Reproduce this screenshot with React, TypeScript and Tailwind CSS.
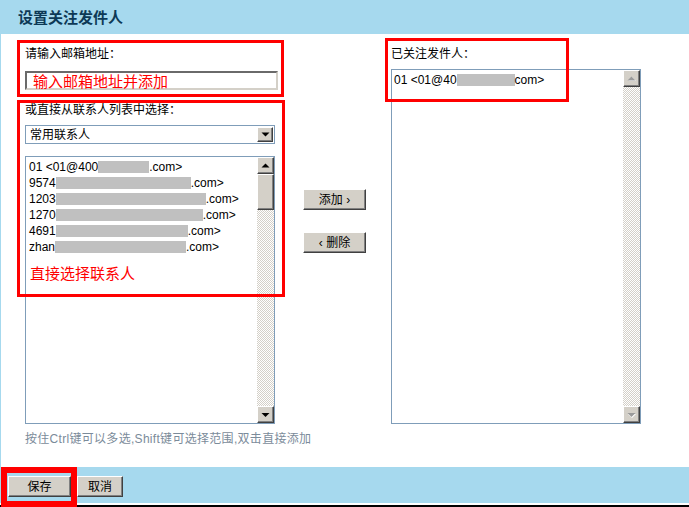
import React from "react";

const btn =
  "bg-[#d4d0c8] border border-t-white border-l-white border-b-[#404040] border-r-[#404040] shadow-[inset_-1px_-1px_0_#808080] flex items-center justify-center text-[12px] leading-none text-black";

function Arrow({ up, disabled }: { up?: boolean; disabled?: boolean }) {
  return (
    <div className={`${btn} h-[17px] w-[17px] shrink-0`}>
      <svg width="9" height="6" viewBox="0 0 9 6">
        {disabled && (
          <polygon points={up ? "5,1 9,5 1,5" : "1,2 9,2 5,6"} fill="#ffffff" />
        )}
        <polygon
          points={up ? "4.5,0.5 8.5,4.5 0.5,4.5" : "0.5,1 8.5,1 4.5,5"}
          fill={disabled ? "#9a9a9a" : "#000000"}
        />
      </svg>
    </div>
  );
}

function Scrollbar({ thumb, disabled }: { thumb?: boolean; disabled?: boolean }) {
  return (
    <div className="w-[17px] flex flex-col shrink-0">
      <Arrow up disabled={disabled} />
      {thumb && <div className={`${btn} h-[36px] w-[17px] shrink-0`} />}
      <div className="flex-1 bg-[image:repeating-conic-gradient(#d4d0c8_0%_25%,#ffffff_0%_50%)] bg-[length:2px_2px]" />
      <Arrow disabled={disabled} />
    </div>
  );
}

function Gray({ w }: { w: number }) {
  const widths: Record<number, string> = {
    51: "w-[51px]",
    58: "w-[58px]",
    135: "w-[135px]",
    150: "w-[150px]",
    147: "w-[147px]",
    132: "w-[132px]",
    131: "w-[131px]",
  };
  return <span className={`inline-block h-[12px] bg-[#c0c0c0] align-[-2px] ${widths[w]}`} />;
}

const rows: [string, number, string][] = [
  ["01 <01@400", 51, ".com>"],
  ["9574", 135, ".com>"],
  ["1203", 150, ".com>"],
  ["1270", 147, ".com>"],
  ["4691", 132, ".com>"],
  ["zhan", 131, ".com>"],
];

export default function App() {
  return (
    <div className="w-[689px] h-[507px] flex flex-col bg-white overflow-hidden font-['Liberation_Sans','Noto_Sans_CJK_SC',sans-serif] text-[12px] text-black">
      <header className="h-[34px] shrink-0 bg-[#a6d9ee] pl-[18px] flex items-center">
        <h1 className="text-[15px] font-bold text-[#0d3956] leading-none">设置关注发件人</h1>
      </header>

      <main className="relative h-[433px] shrink-0 border-l border-[#a6d9ee] flex pl-[24px]">
        {/* left column */}
        <div className="w-[250px] flex flex-col pt-[12px]">
          <div className="leading-[16px] h-[16px]">请输入邮箱地址：</div>
          <div className="mt-[9px] h-[19px] border-2 border-t-[#6a6a6a] border-l-[#6a6a6a] border-b-[#d4d0c8] border-r-[#d4d0c8] flex items-center pl-[6px] w-[253px]">
            <span className="text-[15px] leading-none text-[#ff0000] font-['Noto_Sans_CJK_SC',sans-serif]">输入邮箱地址并添加</span>
          </div>
          <div className="mt-[12px] leading-[16px] h-[16px]">或直接从联系人列表中选择：</div>
          <div className="mt-[7px] h-[19px] border border-[#7f9db9] p-px flex">
            <div className="flex-1 flex items-center pl-[3px] leading-none">常用联系人</div>
            <div className={`${btn} w-[16px] h-full`}>
              <svg width="9" height="5" viewBox="0 0 9 5">
                <polygon points="0.5,0.5 8.5,0.5 4.5,4.5" fill="#000" />
              </svg>
            </div>
          </div>
          <div className="mt-[12px] h-[268px] border border-[#7f9db9] flex">
            <div className="flex-1 pt-[2px] pl-[3px] overflow-hidden">
              {rows.map(([a, w, b], i) => (
                <div key={i} className="h-[16px] leading-[16px] whitespace-nowrap">
                  {a}
                  <Gray w={w} />
                  {b}
                </div>
              ))}
              <div className="mt-[10px] pl-[1px] text-[15px] leading-[16px] text-[#ff0000] font-['Noto_Sans_CJK_SC',sans-serif]">
                直接选择联系人
              </div>
            </div>
            <Scrollbar thumb />
          </div>
          <div className="mt-[7px] leading-[16px] text-[#7b8b9a] whitespace-nowrap tracking-[0.3px]">
            按住Ctrl键可以多选,Shift键可选择范围,双击直接添加
          </div>
        </div>

        {/* middle buttons */}
        <div className="ml-[28px] w-[63px] flex flex-col pt-[155px] gap-[22px]">
          <div className={`${btn} h-[21px]`}>添加 ›</div>
          <div className={`${btn} h-[21px]`}>‹ 删除</div>
        </div>

        {/* right column */}
        <div className="ml-[25px] w-[250px] flex flex-col pt-[12px]">
          <div className="leading-[16px] h-[16px]">已关注发件人：</div>
          <div className="mt-[7px] h-[355px] border border-[#7f9db9] flex">
            <div className="flex-1 pt-[2px] pl-[2px]">
              <div className="h-[16px] leading-[16px] whitespace-nowrap">
                01 &lt;01@40
                <Gray w={58} />
                com&gt;
              </div>
            </div>
            <Scrollbar disabled />
          </div>
        </div>

        {/* annotations */}
        <div className="absolute left-[16px] top-[6px] w-[267px] h-[57px] border-[3px] border-[#ff0000] pointer-events-none" />
        <div className="absolute left-[16px] top-[66px] w-[268px] h-[197px] border-[3px] border-[#ff0000] pointer-events-none" />
        <div className="absolute left-[384px] top-[4px] w-[184px] h-[64px] border-[3px] border-[#ff0000] pointer-events-none" />
      </main>

      <footer className="relative h-[36px] shrink-0 bg-[#a6d9ee] flex items-start pt-[9px] pl-[8px] gap-[6px]">
        <div className={`${btn} w-[63px] h-[21px]`}>保存</div>
        <div className={`${btn} w-[46px] h-[21px]`}>取消</div>
        <div className="absolute left-[1px] top-0 w-[76px] h-[40px] border-[6px] border-[#ff0000] pointer-events-none" />
      </footer>
      <div className="h-[2px] shrink-0 bg-white" />
      <div className="h-[2px] shrink-0 bg-black" />
    </div>
  );
}
